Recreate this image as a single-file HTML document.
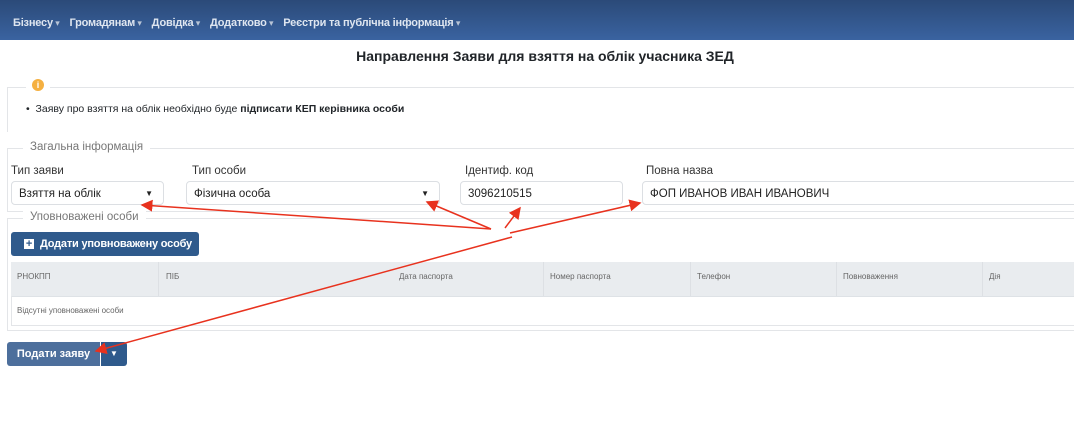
<!DOCTYPE html><html><head><meta charset="utf-8"><style>
body{margin:0;width:1074px;height:446px;overflow:hidden;background:#fff;font-family:"Liberation Sans","DejaVu Sans",sans-serif;color:#212529;position:relative}
.a{position:absolute;white-space:nowrap}
.nav{left:0;top:0;width:1074px;height:40px;background:linear-gradient(#2b4a78,#3a63a0)}
.nav span{color:#dfe6f0;font-size:11px;font-weight:bold;margin-right:10px;letter-spacing:-0.2px}
.nav span:after{content:" ▾";font-size:9px;color:#b8c4d6}
.fs{border:1px solid #e3e5e8;border-bottom:none}
.leg{background:#fff;color:#777;font-size:11.5px;padding:0 7px}
.lbl{font-size:11.5px;color:#333}
.inp{border:1px solid #dcdfe3;border-radius:4px;height:24px;font-size:11.5px;line-height:24px;padding-left:7px;box-sizing:border-box;color:#222}
.th{font-size:8px;color:#666;top:272px}
</style></head><body>
<div class="a nav"><div style="position:absolute;left:13px;top:13px"><span>Бізнесу</span><span>Громадянам</span><span>Довідка</span><span>Додатково</span><span>Реєстри та публічна інформація</span></div></div>
<div class="a" style="left:0;width:1090px;top:48px;text-align:center;font-size:14px;font-weight:bold">Направлення Заяви для взяття на облік учасника ЗЕД</div>
<div class="a fs" style="left:7px;top:87px;width:1080px;height:44px"></div>
<div class="a" style="left:26px;top:78px;width:24px;height:14px;background:#fff"></div>
<div class="a" style="left:32px;top:79px;width:12px;height:12px;border-radius:50%;background:#f5b041;color:#fff;font-size:9px;font-weight:bold;text-align:center;line-height:12px">i</div>
<div class="a" style="left:26px;top:103px;font-size:10.5px">•&nbsp; Заяву про взяття на облік необхідно буде <b>підписати КЕП керівника особи</b></div>
<div class="a fs" style="left:7px;top:148px;width:1080px;height:62px;border-bottom:1px solid #e3e5e8"></div>
<div class="a leg" style="left:23px;top:141px">Загальна інформація</div>
<div class="a lbl" style="left:11px;top:165px">Тип заяви</div>
<div class="a lbl" style="left:192px;top:165px">Тип особи</div>
<div class="a lbl" style="left:465px;top:165px">Ідентиф. код</div>
<div class="a lbl" style="left:646px;top:165px">Повна назва</div>
<div class="a inp" style="left:11px;top:181px;width:153px">Взяття на облік<span style="position:absolute;right:10px;font-size:8px">▼</span></div>
<div class="a inp" style="left:186px;top:181px;width:254px">Фізична особа<span style="position:absolute;right:10px;font-size:8px">▼</span></div>
<div class="a inp" style="left:460px;top:181px;width:163px">3096210515</div>
<div class="a inp" style="left:642px;top:181px;width:440px">ФОП ИВАНОВ ИВАН ИВАНОВИЧ</div>
<div class="a fs" style="left:7px;top:218px;width:1080px;height:111px;border-bottom:1px solid #e3e5e8"></div>
<div class="a leg" style="left:23px;top:211px">Уповноважені особи</div>
<div class="a" style="left:11px;top:232px;width:188px;height:24px;background:#2f5a8c;border-radius:3px;color:#fff;font-size:11px;font-weight:bold;line-height:24px;letter-spacing:-0.2px"><span style="display:inline-block;width:10px;height:10px;background:#fff;color:#2f5a8c;font-size:11px;line-height:10px;text-align:center;margin:0 6px 0 13px">+</span>Додати уповноважену особу</div>
<div class="a" style="left:11px;top:262px;width:1070px;height:34px;background:#e9ecef;border-bottom:1px solid #dee2e6"></div>
<div class="a" style="left:11px;top:296px;width:1070px;height:30px;border:1px solid #e3e5e8;border-top:none;box-sizing:border-box"></div>
<div class="a" style="left:158px;top:262px;width:1px;height:34px;background:#dde0e4"></div>
<div class="a" style="left:543px;top:262px;width:1px;height:34px;background:#dde0e4"></div>
<div class="a" style="left:690px;top:262px;width:1px;height:34px;background:#dde0e4"></div>
<div class="a" style="left:836px;top:262px;width:1px;height:34px;background:#dde0e4"></div>
<div class="a" style="left:982px;top:262px;width:1px;height:34px;background:#dde0e4"></div>
<div class="a th" style="left:17px">РНОКПП</div><div class="a th" style="left:166px">ПІБ</div>
<div class="a th" style="left:399px">Дата паспорта</div><div class="a th" style="left:550px">Номер паспорта</div>
<div class="a th" style="left:697px">Телефон</div><div class="a th" style="left:843px">Повноваження</div><div class="a th" style="left:989px">Дія</div>
<div class="a" style="left:17px;top:306px;font-size:8px;color:#666">Відсутні уповноважені особи</div>
<div class="a" style="left:7px;top:342px;width:93px;height:24px;background:#4d6f9c;border-radius:3px 0 0 3px;color:#fff;font-size:11px;font-weight:bold;line-height:24px;text-align:center">Подати заяву</div>
<div class="a" style="left:101px;top:342px;width:26px;height:24px;background:#2f5a8c;border-radius:0 3px 3px 0;color:#fff;font-size:8px;line-height:24px;text-align:center">▼</div>
<svg class="a" style="left:0;top:0" width="1074" height="446"><defs><marker id="m" markerWidth="8" markerHeight="8" refX="7" refY="4" orient="auto"><path d="M0,0L8,4L0,8z" fill="#e8321e"/></marker></defs>
<g stroke="#e8321e" stroke-width="1.5" fill="none">
<line x1="491" y1="229" x2="142" y2="205" marker-end="url(#m)"/>
<line x1="491" y1="229" x2="427" y2="202" marker-end="url(#m)"/>
<line x1="505" y1="228" x2="520" y2="208" marker-end="url(#m)"/>
<line x1="510" y1="233" x2="640" y2="203" marker-end="url(#m)"/>
<line x1="512" y1="237" x2="96" y2="351" marker-end="url(#m)"/>
</g></svg>
</body></html>
